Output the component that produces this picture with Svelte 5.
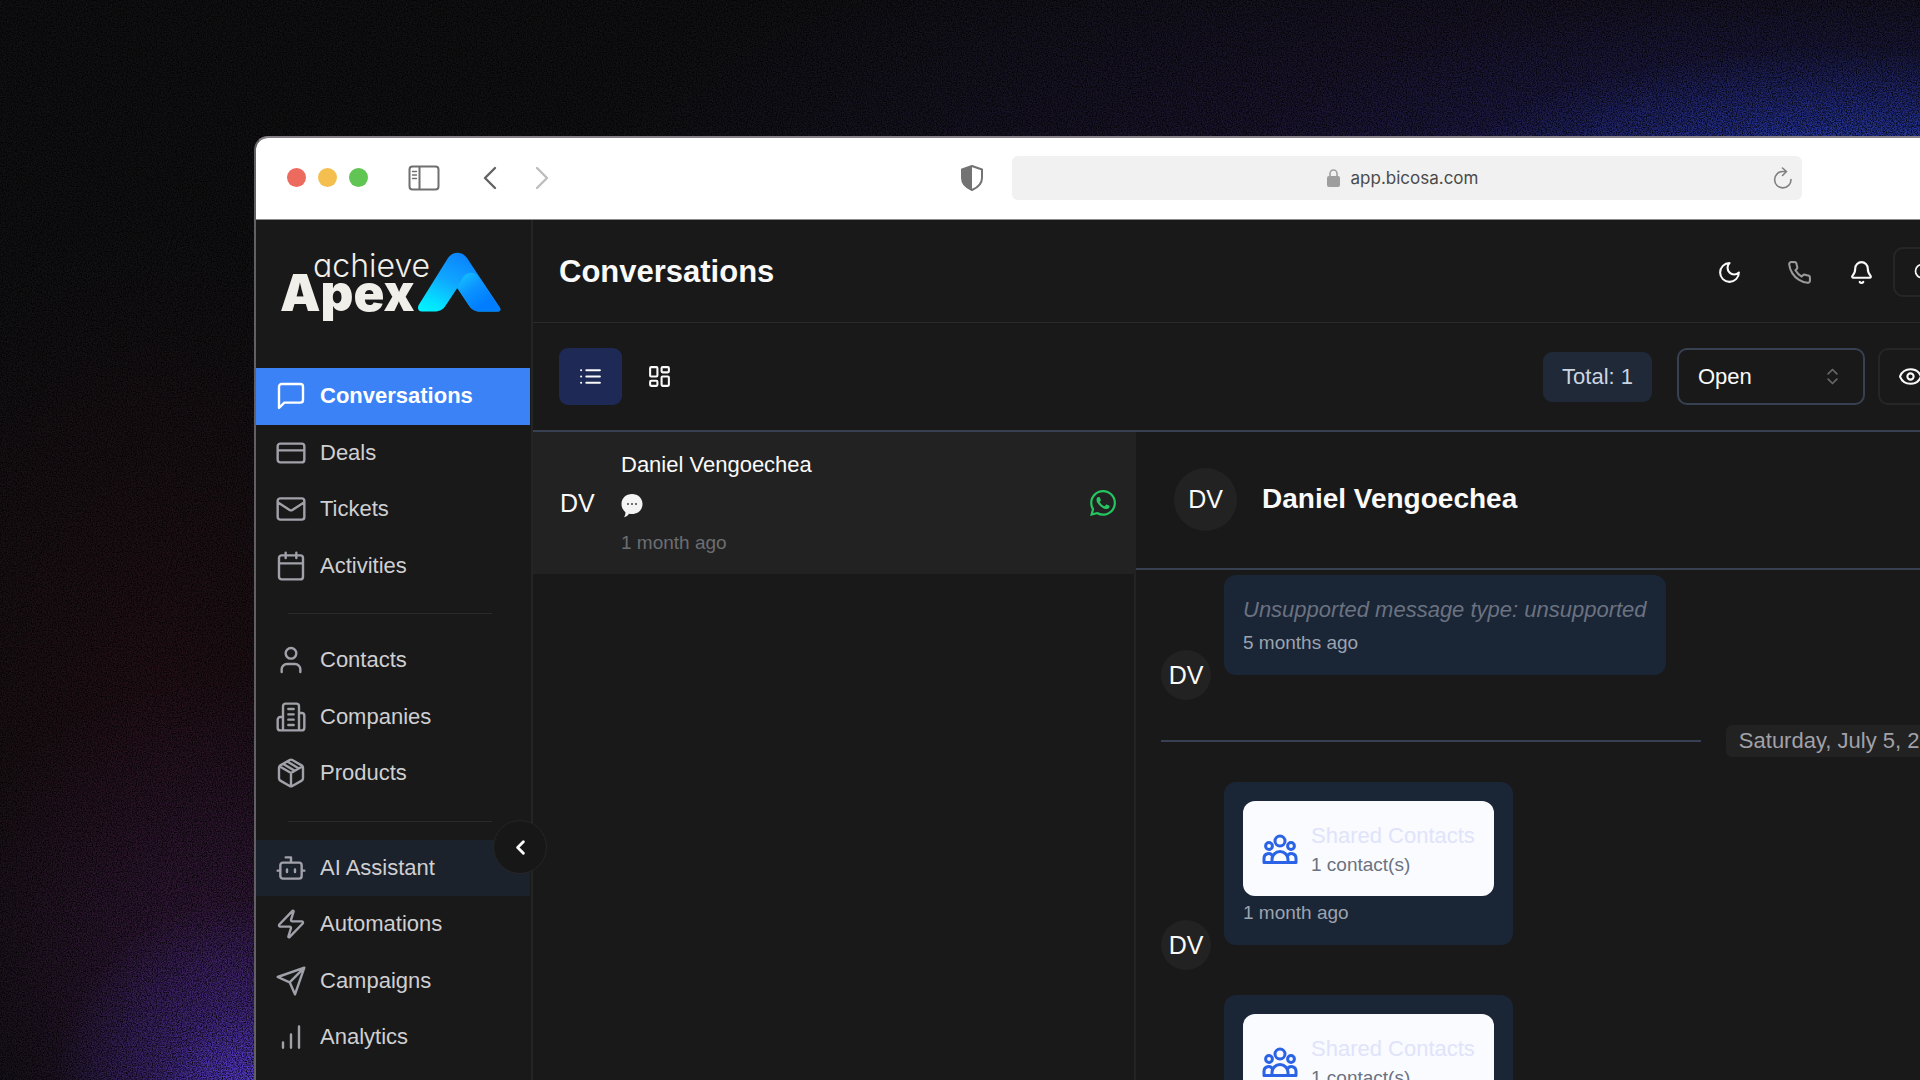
<script>
  const groups = [
    [
      { label: 'Conversations', icon: 'message', active: true },
      { label: 'Deals', icon: 'card' },
      { label: 'Tickets', icon: 'mail' },
      { label: 'Activities', icon: 'calendar' }
    ],
    [
      { label: 'Contacts', icon: 'user' },
      { label: 'Companies', icon: 'building' },
      { label: 'Products', icon: 'package' }
    ],
    [
      { label: 'AI Assistant', icon: 'bot', tinted: true },
      { label: 'Automations', icon: 'zap' },
      { label: 'Campaigns', icon: 'send' },
      { label: 'Analytics', icon: 'bars' }
    ]
  ];

  const paths = {
    message: 'M21 15a2 2 0 0 1-2 2H7l-4 4V5a2 2 0 0 1 2-2h14a2 2 0 0 1 2 2z',
    card: 'M4 5h16a2 2 0 0 1 2 2v10a2 2 0 0 1-2 2H4a2 2 0 0 1-2-2V7a2 2 0 0 1 2-2zM2 10h20',
    mail: 'M4 4h16a2 2 0 0 1 2 2v12a2 2 0 0 1-2 2H4a2 2 0 0 1-2-2V6a2 2 0 0 1 2-2zM22 7l-8.97 5.7a1.94 1.94 0 0 1-2.06 0L2 7',
    calendar: 'M8 2v4M16 2v4M5 4h14a2 2 0 0 1 2 2v14a2 2 0 0 1-2 2H5a2 2 0 0 1-2-2V6a2 2 0 0 1 2-2zM3 10h18',
    user: 'M19 21v-2a4 4 0 0 0-4-4H9a4 4 0 0 0-4 4v2M16 7a4 4 0 1 1-8 0 4 4 0 0 1 8 0z',
    building: 'M6 22V4a2 2 0 0 1 2-2h8a2 2 0 0 1 2 2v18ZM6 12H4a2 2 0 0 0-2 2v6a2 2 0 0 0 2 2h2M18 9h2a2 2 0 0 1 2 2v9a2 2 0 0 1-2 2h-2M10 6h4M10 10h4M10 14h4M10 18h4',
    package: 'M6.2 5.3 14.6 10.2M9.600 3.600 17.600 8.400M12 22V12M3.3 7 12 12l8.7-5M21 8a2 2 0 0 0-1-1.73l-7-4a2 2 0 0 0-2 0l-7 4A2 2 0 0 0 3 8v8a2 2 0 0 0 1 1.73l7 4a2 2 0 0 0 2 0l7-4A2 2 0 0 0 21 16Z',
    bot: 'M12 8V4H8M6 8h12a2 2 0 0 1 2 2v8a2 2 0 0 1-2 2H6a2 2 0 0 1-2-2v-8a2 2 0 0 1 2-2zM2 14h2M20 14h2M15 13v2M9 13v2',
    zap: 'M4 14a1 1 0 0 1-.78-1.63l9.9-10.2a.5.5 0 0 1 .86.46l-1.92 6.02A1 1 0 0 0 13 10h7a1 1 0 0 1 .78 1.63l-9.9 10.2a.5.5 0 0 1-.86-.46l1.92-6.02A1 1 0 0 0 11 14z',
    send: 'm22 2-7 20-4-9-9-4ZM22 2 11 13',
    bars: 'M12 20V10M18 20V4M6 20v-4',
    moon: 'M12 3a6 6 0 0 0 9 9 9 9 0 1 1-9-9Z',
    phone: 'M22 16.92v3a2 2 0 0 1-2.18 2 19.79 19.79 0 0 1-8.63-3.07 19.5 19.5 0 0 1-6-6 19.79 19.79 0 0 1-3.07-8.67A2 2 0 0 1 4.11 2h3a2 2 0 0 1 2 1.72 12.84 12.84 0 0 0 .7 2.81 2 2 0 0 1-.45 2.11L8.09 9.91a16 16 0 0 0 6 6l1.27-1.27a2 2 0 0 1 2.11-.45 12.84 12.84 0 0 0 2.81.7A2 2 0 0 1 22 16.92z',
    bell: 'M10.268 21a2 2 0 0 0 3.464 0M3.262 15.326A1 1 0 0 0 4 17h16a1 1 0 0 0 .74-1.673C19.41 13.956 18 12.499 18 8A6 6 0 0 0 6 8c0 4.499-1.411 5.956-2.738 7.326',
    search: 'M19 11a8 8 0 1 1-16 0 8 8 0 0 1 16 0zM21 21l-4.3-4.3',
    list: 'M3 6h.01M3 12h.01M3 18h.01M8 6h13M8 12h13M8 18h13',
    board: 'M4 3h5a1 1 0 0 1 1 1v7a1 1 0 0 1-1 1H4a1 1 0 0 1-1-1V4a1 1 0 0 1 1-1zM15 3h5a1 1 0 0 1 1 1v3a1 1 0 0 1-1 1h-5a1 1 0 0 1-1-1V4a1 1 0 0 1 1-1zM15 12h5a1 1 0 0 1 1 1v7a1 1 0 0 1-1 1h-5a1 1 0 0 1-1-1v-7a1 1 0 0 1 1-1zM4 16h5a1 1 0 0 1 1 1v3a1 1 0 0 1-1 1H4a1 1 0 0 1-1-1v-3a1 1 0 0 1 1-1z',
    eye: 'M2.06 12.35a1 1 0 0 1 0-.7 10.75 10.75 0 0 1 19.88 0 1 1 0 0 1 0 .7 10.75 10.75 0 0 1-19.88 0M15 12a3 3 0 1 1-6 0 3 3 0 0 1 6 0z',
    updown: 'm7 15 5 5 5-5M7 9l5-5 5 5',
    left: 'm15 18-6-6 6-6'
  };

  const shared = [1, 2];
</script>

{#snippet icon(name)}
  <svg class="icon" viewBox="0 0 24 24" aria-hidden="true"><path d={paths[name]} /></svg>
{/snippet}

<div class="stage">
  <svg class="grain" aria-hidden="true">
    <filter id="noise" x="0" y="0" width="100%" height="100%">
      <feTurbulence type="fractalNoise" baseFrequency="0.8" numOctaves="2" seed="4" />
      <feColorMatrix type="matrix" values="0 0 0 0 0  0 0 0 0 0  0 0 0 0 0  2 0 0 0 -0.7" />
    </filter>
    <rect width="100%" height="100%" filter="url(#noise)" />
  </svg>

  <div class="window">
    <header class="chrome">
      <div class="nav-tools">
        <div class="lights"><i class="red"></i><i class="amber"></i><i class="green"></i></div>
        <button class="plain panel" aria-label="Toggle sidebar">
          <svg width="32" height="26" viewBox="0 0 32 26" fill="none" stroke="#6f6f6f" stroke-width="2">
            <rect x="1.5" y="1.5" width="29" height="23" rx="3" /><path d="M11.5 1.5v23" /><path d="M4.5 6.5h4M4.5 10h4M4.5 13.5h4" stroke-width="1.4" stroke-linecap="round" />
          </svg>
        </button>
        <button class="plain back" aria-label="Back">
          <svg width="14" height="24" viewBox="0 0 14 24" fill="none" stroke="#636363" stroke-width="2.4" stroke-linecap="round" stroke-linejoin="round"><path d="M12 2 2 12l10 10" /></svg>
        </button>
        <button class="plain" aria-label="Forward">
          <svg width="14" height="24" viewBox="0 0 14 24" fill="none" stroke="#bdbdbd" stroke-width="2.4" stroke-linecap="round" stroke-linejoin="round"><path d="m2 2 10 10L2 22" /></svg>
        </button>
      </div>
      <button class="plain shield" aria-label="Privacy report">
        <svg width="24" height="28" viewBox="0 0 24 28"><path d="M12 2 22 5.5V14c0 6-4 9.5-10 12C6 23.500 2 20 2 14V5.500Z" fill="none" stroke="#737373" stroke-width="2" stroke-linejoin="round" /><path d="M12 2 2 5.500V14c0 6 4 9.500 10 12Z" fill="#737373" /></svg>
      </button>
      <div class="address">
        <span class="host">
          <svg width="13" height="19" viewBox="0 0 13 19"><path d="M3 9V5.500a3.500 3.500 0 0 1 7 0V9" fill="none" stroke="#a0a0a0" stroke-width="1.600" /><rect y="8" width="13" height="11" rx="2" fill="#9e9e9e" /></svg>
          <span>app.bicosa.com</span>
        </span>
        <button class="plain" aria-label="Reload">
          <svg width="20" height="22" viewBox="0 0 20 22" fill="none" stroke="#808080" stroke-width="1.600" stroke-linecap="round" stroke-linejoin="round"><path d="M18 12.500a8.200 8.200 0 1 1-8-8h3M9.500 1l4 3.500-4 4" /></svg>
        </button>
      </div>
    </header>

    <div class="app">
      <aside>
        <svg class="logo" viewBox="0 0 224 64" role="img" aria-label="achieve Apex">
          <defs>
            <linearGradient id="legA" x1="0" y1="1" x2="0.6" y2="0.1"><stop offset="0" stop-color="#00f6ff" /><stop offset="0.22" stop-color="#04e0ff" /><stop offset="0.6" stop-color="#10a6ff" /><stop offset="1" stop-color="#0a86ff" /></linearGradient>
            <linearGradient id="legB" x1="0" y1="0.1" x2="0.6" y2="0.8"><stop offset="0" stop-color="#14c4ff" /><stop offset="0.5" stop-color="#0c94ff" /><stop offset="1" stop-color="#007eff" /></linearGradient>
          </defs>
          <text class="word-top" x="35" y="25">achieve</text>
          <text class="word-main" x="2" y="59">Apex</text>
          <path d="M144 59.500c-4 0-5-4-3-7L170 6c5-7 14-7 19 0l33 50c1 2 0 3.500-2 3.500h-17c-6 0-9-2-12-6L179.300 36 168 53c-3 5-7 6.500-12 6.500z" fill="url(#legA)" />
          <path d="M179.300 36 184 27c4-7 10-8 15-4L222 56c1 2 0 3.500-2 3.500h-17c-6 0-9-2-12-6z" fill="url(#legB)" />
        </svg>

        <nav>
          {#each groups as group}
            <ul style:--rows={group.length}>
              {#each group as item}
                <li><a href="#{item.icon}" class:active={item.active} class:tinted={item.tinted}>{@render icon(item.icon)}<span>{item.label}</span></a></li>
              {/each}
            </ul>
          {/each}
        </nav>
        <button class="collapse" aria-label="Collapse sidebar">{@render icon('left')}</button>
      </aside>

      <main>
        <div class="titlebar">
          <h1>Conversations</h1>
          <div class="quick">
            <button class="plain" aria-label="Theme">{@render icon('moon')}</button>
            <button class="plain dim" aria-label="Calls">{@render icon('phone')}</button>
            <button class="plain" aria-label="Notifications">{@render icon('bell')}</button>
            <button class="outlined search" aria-label="Search">{@render icon('search')}</button>
          </div>
        </div>

        <div class="toolbar">
          <div class="views">
            <button class="view on" aria-label="List view">{@render icon('list')}</button>
            <button class="view" aria-label="Board view">{@render icon('board')}</button>
          </div>
          <div class="filters">
            <span class="total">Total: 1</span>
            <label class="status">
              <select aria-label="Status"><option>Open</option></select>
              {@render icon('updown')}
            </label>
            <button class="outlined visibility" aria-label="Visibility">{@render icon('eye')}</button>
          </div>
        </div>

        <div class="split">
          <section class="threads">
            <a class="thread" href="#thread">
              <span class="initials">DV</span>
              <span class="summary">
                <span class="name">Daniel Vengoechea</span>
                <svg width="22" height="26" viewBox="0 0 22 26" role="img" aria-label="Message">
                  <path d="M11 2c6 0 10.500 4 10.500 10s-4.500 10-10.500 10c-1 0-2 0-3-.3-1 1.700-3 3.200-5 3.500 1-1.500 1.500-3 1.400-5C2 18 .5 15.500.5 12 .5 6 5 2 11 2z" fill="#f4f4f4" />
                  <circle cx="7" cy="12" r="1" fill="#444" /><circle cx="11" cy="12" r="1" fill="#444" /><circle cx="15" cy="12" r="1" fill="#444" />
                </svg>
                <span class="time">1 month ago</span>
              </span>
              <svg class="whatsapp" viewBox="0 0 24 24" fill="#25c560" role="img" aria-label="WhatsApp">
                <path d="M17.472 14.382c-.297-.149-1.758-.867-2.030-.967-.273-.099-.471-.148-.670.150-.197.297-.767.966-.940 1.164-.173.199-.347.223-.644.075-.297-.150-1.255-.463-2.390-1.475-.883-.788-1.480-1.761-1.653-2.059-.173-.297-.018-.458.130-.606.134-.133.298-.347.446-.520.149-.174.198-.298.298-.497.099-.198.050-.371-.025-.520-.075-.149-.669-1.612-.916-2.207-.242-.579-.487-.500-.669-.510-.173-.008-.371-.010-.570-.010-.198 0-.520.074-.792.372-.272.297-1.040 1.016-1.040 2.479 0 1.462 1.065 2.875 1.213 3.074.149.198 2.096 3.200 5.077 4.487.709.306 1.262.489 1.694.625.712.227 1.360.195 1.871.118.571-.085 1.758-.719 2.006-1.413.248-.694.248-1.289.173-1.413-.074-.124-.272-.198-.570-.347m-5.421 7.403h-.004a9.870 9.870 0 0 1-5.031-1.378l-.361-.214-3.741.982.998-3.648-.235-.374a9.860 9.860 0 0 1-1.510-5.260c.001-5.450 4.436-9.884 9.888-9.884 2.640 0 5.122 1.030 6.988 2.898a9.825 9.825 0 0 1 2.893 6.994c-.003 5.450-4.437 9.884-9.885 9.884m8.413-18.297A11.815 11.815 0 0 0 12.050 0C5.495 0 .160 5.335.157 11.892c0 2.096.547 4.142 1.588 5.945L.057 24l6.305-1.654a11.882 11.882 0 0 0 5.683 1.448h.005c6.554 0 11.890-5.335 11.893-11.893a11.821 11.821 0 0 0-3.480-8.413z" />
              </svg>
            </a>
          </section>

          <section class="chat">
            <header class="person"><span class="avatar large">DV</span><h2>Daniel Vengoechea</h2></header>
            <div class="messages">
              <article>
                <span class="avatar">DV</span>
                <div class="bubble"><em>Unsupported message type: unsupported</em><time>5 months ago</time></div>
              </article>
              <div class="day"><span>Saturday, July 5, 2025</span></div>
              {#each shared as id (id)}
                <article>
                  <span class="avatar">DV</span>
                  <div class="bubble">
                    <div class="contact">
                      <svg width="36" height="32" viewBox="0 0 36 32" fill="none" stroke="#2b63e6" stroke-width="3" stroke-linejoin="round" aria-hidden="true">
                        <circle cx="18" cy="8" r="5" /><circle cx="7" cy="13" r="3.400" /><circle cx="29" cy="13" r="3.400" />
                        <path d="M10 29.500v-3a8 8 0 0 1 16 0v3zM10 29.500H2v-4.500a4.500 4.500 0 0 1 8.500-2M26 29.500h8v-4.500a4.500 4.500 0 0 0-8.500-2" />
                      </svg>
                      <div><strong>Shared Contacts</strong><span>1 contact(s)</span></div>
                    </div>
                    <time>1 month ago</time>
                  </div>
                </article>
              {/each}
            </div>
          </section>
        </div>
      </main>
    </div>
  </div>
</div>

<style>
  :global(body) { margin: 0; background: #09090a; overflow: hidden; }
  .stage, .stage :global(*) { box-sizing: border-box; }
  .stage {
    position: relative;
    height: 100vh;
    padding: 136px 0 0 254px;
    overflow: hidden;
    font: 22px/28px "Liberation Sans", Arial, sans-serif;
    color: #fafafa;
    background:
      radial-gradient(ellipse 620px 200px at 97% 17%, #2c48cc 0%, rgba(36, 52, 160, 0.75) 35%, rgba(26, 30, 90, 0.35) 68%, transparent 100%),
      radial-gradient(ellipse 1000px 260px at 82% 14%, rgba(44, 28, 96, 0.55), transparent 100%),
      radial-gradient(ellipse 200px 190px at 13% 101%, #5c3fe0 0%, rgba(74, 46, 160, 0.6) 45%, transparent 100%),
      radial-gradient(ellipse 300px 300px at 12% 90%, rgba(74, 32, 96, 0.6), transparent 100%),
      radial-gradient(ellipse 320px 460px at 8% 64%, rgba(44, 16, 24, 0.7), transparent 100%),
      #111113;
  }
  .grain { position: absolute; inset: 0; width: 100%; height: 100%; }
  button { font: inherit; color: inherit; }
  a { color: inherit; text-decoration: none; }
  h1, h2, ul { margin: 0; padding: 0; }
  svg { display: block; flex: none; }
  .icon { width: 25px; height: 25px; fill: none; stroke: currentColor; stroke-width: 2; stroke-linecap: round; stroke-linejoin: round; }
  .plain { display: flex; padding: 0; border: 0; background: none; }

  .window {
    position: relative;
    display: flex;
    flex-direction: column;
    width: 120vw;
    height: 100%;
    border: solid #848086;
    border-width: 2px 0 0 2px;
    border-left-color: #626064;
    border-radius: 14px 0 0 0;
    overflow: hidden;
    background: #191919;
  }
  .chrome {
    display: grid;
    grid-template-columns: 1fr 790px 1fr;
    align-items: center;
    height: 82px;
    flex: none;
    padding-bottom: 2px;
    background: #fff;
    border-bottom: 1px solid #8a8e8a;
  }
  .nav-tools { grid-column: 1; grid-row: 1; display: flex; align-items: center; padding-left: 31px; }
  .lights { display: flex; gap: 12px; margin-right: 40px; }
  .lights i { width: 19px; height: 19px; border-radius: 50%; }
  .red { background: #ec6a5e; }
  .amber { background: #f4bf4f; }
  .green { background: #61c554; }
  .panel { margin-right: 43px; }
  .back { margin-right: 38px; }
  .shield { grid-column: 1; grid-row: 1; justify-self: end; margin-right: 28px; }
  .address {
    grid-column: 2;
    display: grid;
    grid-template-columns: 1fr auto 1fr;
    align-items: center;
    height: 44px;
    padding-right: 9px;
    border-radius: 6px;
    background: #f1f1f1;
  }
  .address > .plain { grid-column: 3; justify-self: end; }
  .host { grid-column: 2; display: flex; align-items: center; gap: 11px; font: 17px/22px Inter, sans-serif; color: #4a4a4a; }

  .app { display: flex; flex: 1; min-height: 0; }
  aside { position: relative; z-index: 1; width: 277px; flex: none; border-right: 2px solid #242424; padding-right: 1px; }
  .logo { display: block; width: 224px; height: 64px; margin: 32px 0 0 22px; overflow: visible; }
  .word-top { font: 300 32px Inter, sans-serif; font-feature-settings: "cv11"; fill: #f1efe9; }
  .word-main { font: 900 51px Inter, sans-serif; fill: #f1efe9; }
  nav { padding-top: 52px; }
  ul { display: grid; grid-auto-rows: 1fr; height: calc(var(--rows) * 113px / 2); list-style: none; }
  ul + ul { margin-top: 38px; position: relative; }
  ul + ul::before { content: ""; position: absolute; top: -19px; left: 32px; right: 38px; height: 1px; background: #2b2b2b; }
  nav a { display: flex; align-items: center; gap: 13px; height: 100%; padding-left: 19px; color: #cfcfd2; }
  nav .icon { width: 32px; height: 32px; stroke: #a1a1aa; stroke-width: 1.8; }
  nav .active { background: #3b82f6; color: #fff; font-weight: 700; }
  nav .active .icon { stroke: #fff; }
  nav .tinted { background: #1c222c; }
  .collapse {
    position: absolute;
    top: 600px;
    right: -16px;
    display: grid;
    place-items: center;
    width: 54px;
    height: 54px;
    padding: 0;
    border: 1px solid #262626;
    border-radius: 50%;
    background: #171717;
  }
  .collapse .icon { width: 23px; stroke-width: 3; }

  main { flex: 1; min-width: 0; display: flex; flex-direction: column; }
  .titlebar { display: flex; align-items: center; justify-content: space-between; height: 103px; padding: 2px 23px 0 26px; border-bottom: 1px solid #2b2b2b; }
  h1 { font-size: 31px; line-height: 40px; }
  .quick { display: flex; align-items: center; }
  .quick .plain:first-child { margin-right: 45px; }
  .quick .plain + .plain { margin-right: 37px; }
  .quick .plain + .plain + .plain { margin-right: 19px; }
  .dim { color: #9a9a9a; }
  .outlined { display: flex; align-items: center; padding: 0 18px; border: 2px solid #262626; border-radius: 10px; background: none; }
  .search { width: 642px; height: 50px; }
  .search .icon { width: 20px; height: 20px; }
  .toolbar { display: flex; align-items: center; justify-content: space-between; height: 109px; padding: 0 23px 0 26px; border-bottom: 2px solid #374151; }
  .views { display: flex; gap: 6px; }
  .view { display: grid; place-items: center; width: 63px; height: 57px; padding: 0; border: 0; border-radius: 9px; background: none; }
  .view.on { background: #1e2a55; }
  .filters { display: flex; align-items: center; }
  .total { padding: 11px 19px; margin-right: 25px; border-radius: 9px; background: #1f2937; color: #cbd5e1; }
  .status { position: relative; display: flex; margin-right: 13px; }
  select { appearance: none; width: 188px; height: 57px; padding: 0 19px; border: 2px solid #374151; border-radius: 10px; background: none; font: inherit; color: inherit; }
  .status .icon { position: absolute; right: 22px; top: 18px; width: 21px; height: 21px; stroke: #666; pointer-events: none; }
  .visibility { width: 657px; height: 57px; }

  .split { display: flex; flex: 1; min-height: 0; }
  .threads { width: 603px; flex: none; border-right: 2px solid #232323; }
  .thread { display: grid; grid-template-columns: 61px 1fr auto; align-items: center; height: 142px; margin-right: -2px; padding: 0 20px 0 27px; background: #222; }
  .initials { font-size: 25px; }
  .summary { display: flex; flex-direction: column; gap: 13px; }
  .time { font-size: 19px; line-height: 24px; color: #6b6e73; }
  .whatsapp { width: 26px; height: 26px; }

  .chat { flex: 1; min-width: 0; display: flex; flex-direction: column; }
  .person { display: flex; align-items: center; gap: 25px; height: 138px; flex: none; padding: 0 38px 2px; border-bottom: 2px solid #374151; }
  h2 { font-size: 28px; line-height: 36px; }
  .avatar { display: grid; place-items: center; width: 50px; height: 50px; flex: none; margin-bottom: -25px; border-radius: 50%; background: #222; font-size: 25px; }
  .large { width: 63px; height: 63px; margin-bottom: 0; }
  .messages { display: flex; flex-direction: column; padding: 5px 24px 0 25px; min-height: 0; overflow: hidden; }
  article { display: flex; align-items: flex-end; gap: 13px; flex: none; margin-bottom: 50px; }
  .bubble { display: flex; flex-direction: column; gap: 4px; padding: 19px; border-radius: 12px; background: #1a2536; }
  em { line-height: 32px; color: #6b7280; }
  time { font-size: 19px; line-height: 26px; color: #9ca3af; }
  .day { display: flex; align-items: center; gap: 25px; flex: none; margin-bottom: 25px; color: #a1a1aa; }
  .day::before, .day::after { content: ""; flex: 1; height: 2px; background: #374151; }
  .day span { padding: 2px 13px; border-radius: 6px; background: #222; }
  .contact { display: flex; align-items: center; gap: 13px; height: 95px; padding: 0 19px; border-radius: 12px; background: #f9fbff; }
  .contact div { display: flex; flex-direction: column; }
  strong { font-weight: 400; line-height: 32px; color: #e0e3fa; }
  .contact span { font-size: 19px; line-height: 26px; color: #6b7280; }
</style>
